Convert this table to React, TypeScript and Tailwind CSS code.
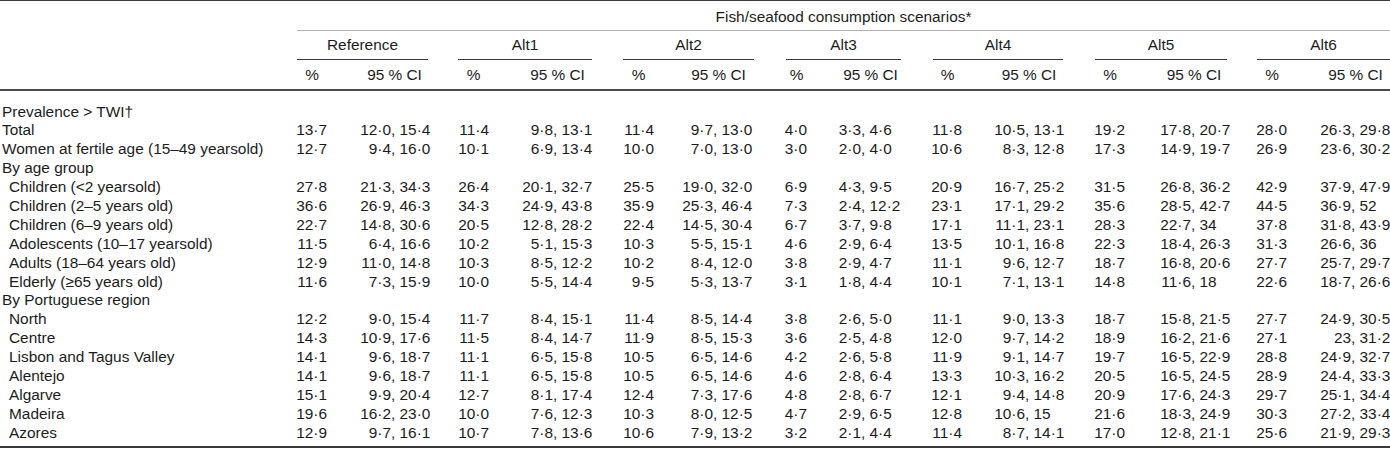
import React from 'react';

const groups = [
  { name: 'Reference', box: 'w-[161px]', line: 'w-[131px]', pct: 'w-[30px]', ci: 'ml-[34px] w-[67px]', left: 'w-[30px]' },
  { name: 'Alt1', box: 'w-[165px]', line: 'w-[134px]', pct: 'w-[31px]', ci: 'ml-[34px] w-[69px]', left: 'w-[30px]' },
  { name: 'Alt2', box: 'w-[163px]', line: 'w-[131px]', pct: 'w-[31px]', ci: 'ml-[29px] w-[71px]', left: 'w-[30px]' },
  { name: 'Alt3', box: 'w-[147px]', line: 'w-[115px]', pct: 'w-[21px]', ci: 'ml-[33px] w-[61px]', left: 'w-[21px]' },
  { name: 'Alt4', box: 'w-[162px]', line: 'w-[130px]', pct: 'w-[29px]', ci: 'ml-[33px] w-[68px]', left: 'w-[30px]' },
  { name: 'Alt5', box: 'w-[162px]', line: 'w-[132px]', pct: 'w-[30px]', ci: 'ml-[36px] w-[66px]', left: 'w-[30px]' },
  { name: 'Alt6', box: 'w-[133px]', line: 'w-[133px]', pct: 'w-[30px]', ci: 'ml-[34px] w-[69px]', left: 'w-[30px]' },
];

// label, indented, values (pct lo hi for each scenario)
const rows: [string, boolean, string?][] = [
  ['Prevalence > TWI†', false],
  ['Total', false, '13.7 12.0 15.4 11.4 9.8 13.1 11.4 9.7 13.0 4.0 3.3 4.6 11.8 10.5 13.1 19.2 17.8 20.7 28.0 26.3 29.8'],
  ['Women at fertile age (15–49 yearsold)', false, '12.7 9.4 16.0 10.1 6.9 13.4 10.0 7.0 13.0 3.0 2.0 4.0 10.6 8.3 12.8 17.3 14.9 19.7 26.9 23.6 30.2'],
  ['By age group', false],
  ['Children (<2 yearsold)', true, '27.8 21.3 34.3 26.4 20.1 32.7 25.5 19.0 32.0 6.9 4.3 9.5 20.9 16.7 25.2 31.5 26.8 36.2 42.9 37.9 47.9'],
  ['Children (2–5 years old)', true, '36.6 26.9 46.3 34.3 24.9 43.8 35.9 25.3 46.4 7.3 2.4 12.2 23.1 17.1 29.2 35.6 28.5 42.7 44.5 36.9 52'],
  ['Children (6–9 years old)', true, '22.7 14.8 30.6 20.5 12.8 28.2 22.4 14.5 30.4 6.7 3.7 9.8 17.1 11.1 23.1 28.3 22.7 34 37.8 31.8 43.9'],
  ['Adolescents (10–17 yearsold)', true, '11.5 6.4 16.6 10.2 5.1 15.3 10.3 5.5 15.1 4.6 2.9 6.4 13.5 10.1 16.8 22.3 18.4 26.3 31.3 26.6 36'],
  ['Adults (18–64 years old)', true, '12.9 11.0 14.8 10.3 8.5 12.2 10.2 8.4 12.0 3.8 2.9 4.7 11.1 9.6 12.7 18.7 16.8 20.6 27.7 25.7 29.7'],
  ['Elderly (≥65 years old)', true, '11.6 7.3 15.9 10.0 5.5 14.4 9.5 5.3 13.7 3.1 1.8 4.4 10.1 7.1 13.1 14.8 11.6 18 22.6 18.7 26.6'],
  ['By Portuguese region', false],
  ['North', true, '12.2 9.0 15.4 11.7 8.4 15.1 11.4 8.5 14.4 3.8 2.6 5.0 11.1 9.0 13.3 18.7 15.8 21.5 27.7 24.9 30.5'],
  ['Centre', true, '14.3 10.9 17.6 11.5 8.4 14.7 11.9 8.5 15.3 3.6 2.5 4.8 12.0 9.7 14.2 18.9 16.2 21.6 27.1 23 31.2'],
  ['Lisbon and Tagus Valley', true, '14.1 9.6 18.7 11.1 6.5 15.8 10.5 6.5 14.6 4.2 2.6 5.8 11.9 9.1 14.7 19.7 16.5 22.9 28.8 24.9 32.7'],
  ['Alentejo', true, '14.1 9.6 18.7 11.1 6.5 15.8 10.5 6.5 14.6 4.6 2.8 6.4 13.3 10.3 16.2 20.5 16.5 24.5 28.9 24.4 33.3'],
  ['Algarve', true, '15.1 9.9 20.4 12.7 8.1 17.4 12.4 7.3 17.6 4.8 2.8 6.7 12.1 9.4 14.8 20.9 17.6 24.3 29.7 25.1 34.4'],
  ['Madeira', true, '19.6 16.2 23.0 10.0 7.6 12.3 10.3 8.0 12.5 4.7 2.9 6.5 12.8 10.6 15 21.6 18.3 24.9 30.3 27.2 33.4'],
  ['Azores', true, '12.9 9.7 16.1 10.7 7.8 13.6 10.6 7.9 13.2 3.2 2.1 4.4 11.4 8.7 14.1 17.0 12.8 21.1 25.6 21.9 29.3'],
];

const dot = (s: string) => s.replace('.', '·');

export default function App() {
  return (
    <div className="w-[1390px] h-[449px] bg-white text-[#1c1c1c] text-[15.4px] leading-[18.9px] font-['Liberation_Sans',Arial,sans-serif]">
      <div className="h-px bg-[#3a3a3a]" />

      {/* Scenario title */}
      <div className="flex h-[29px]">
        <div className="w-[297px] shrink-0" />
        <div className="flex-1 flex flex-col">
          <div className="flex-1 pt-[7px] text-center whitespace-nowrap">Fish/seafood consumption scenarios*</div>
        </div>
      </div>
      <div className="flex">
        <div className="w-[297px] shrink-0" />
        <div className="flex-1 h-px bg-[#b4b4b4]" />
      </div>

      {/* Scenario names */}
      <div className="flex h-[29px]">
        <div className="w-[297px] shrink-0" />
        {groups.map((g) => (
          <div key={g.name} className={`${g.box} shrink-0 flex flex-col`}>
            <div className={`${g.line} flex-1 pt-[5px] text-center whitespace-nowrap`}>{g.name}</div>
            <div className={`${g.line} h-px bg-[#3a3a3a]`} />
          </div>
        ))}
      </div>

      {/* Column captions */}
      <div className="flex h-[29px] pt-[6px]">
        <div className="w-[297px] shrink-0" />
        {groups.map((g) => (
          <div key={g.name} className={`${g.box} shrink-0 flex`}>
            <div className={`${g.pct} shrink-0 flex justify-center whitespace-nowrap`}>%</div>
            <div className={`${g.ci} shrink-0 flex justify-center whitespace-nowrap`}>95 % CI</div>
          </div>
        ))}
      </div>
      <div className="h-[2px] bg-[#4a4a4a]" />

      {/* Body */}
      <div className="pt-[11.5px] h-[355px]">
        {rows.map(([label, indent, values]) => {
          const v = values ? values.split(' ') : [];
          return (
            <div key={label} className="flex h-[18.9px]">
              <div className={`w-[297px] shrink-0 whitespace-nowrap ${indent ? 'pl-[9px]' : 'pl-[2px]'}`}>{label}</div>
              {values &&
                groups.map((g, i) => (
                  <div key={g.name} className={`${g.box} shrink-0 flex`}>
                    <div className={`${g.pct} shrink-0 flex justify-end whitespace-nowrap`}>{dot(v[i * 3])}</div>
                    <div className={`${g.ci} shrink-0 flex whitespace-nowrap`}>
                      <span className={`${g.left} shrink-0 flex justify-end`}>{dot(v[i * 3 + 1])}</span>
                      <span className="whitespace-pre">{', ' + dot(v[i * 3 + 2])}</span>
                    </div>
                  </div>
                ))}
            </div>
          );
        })}
      </div>
      <div className="h-[2px] bg-[#3a3a3a]" />
    </div>
  );
}
